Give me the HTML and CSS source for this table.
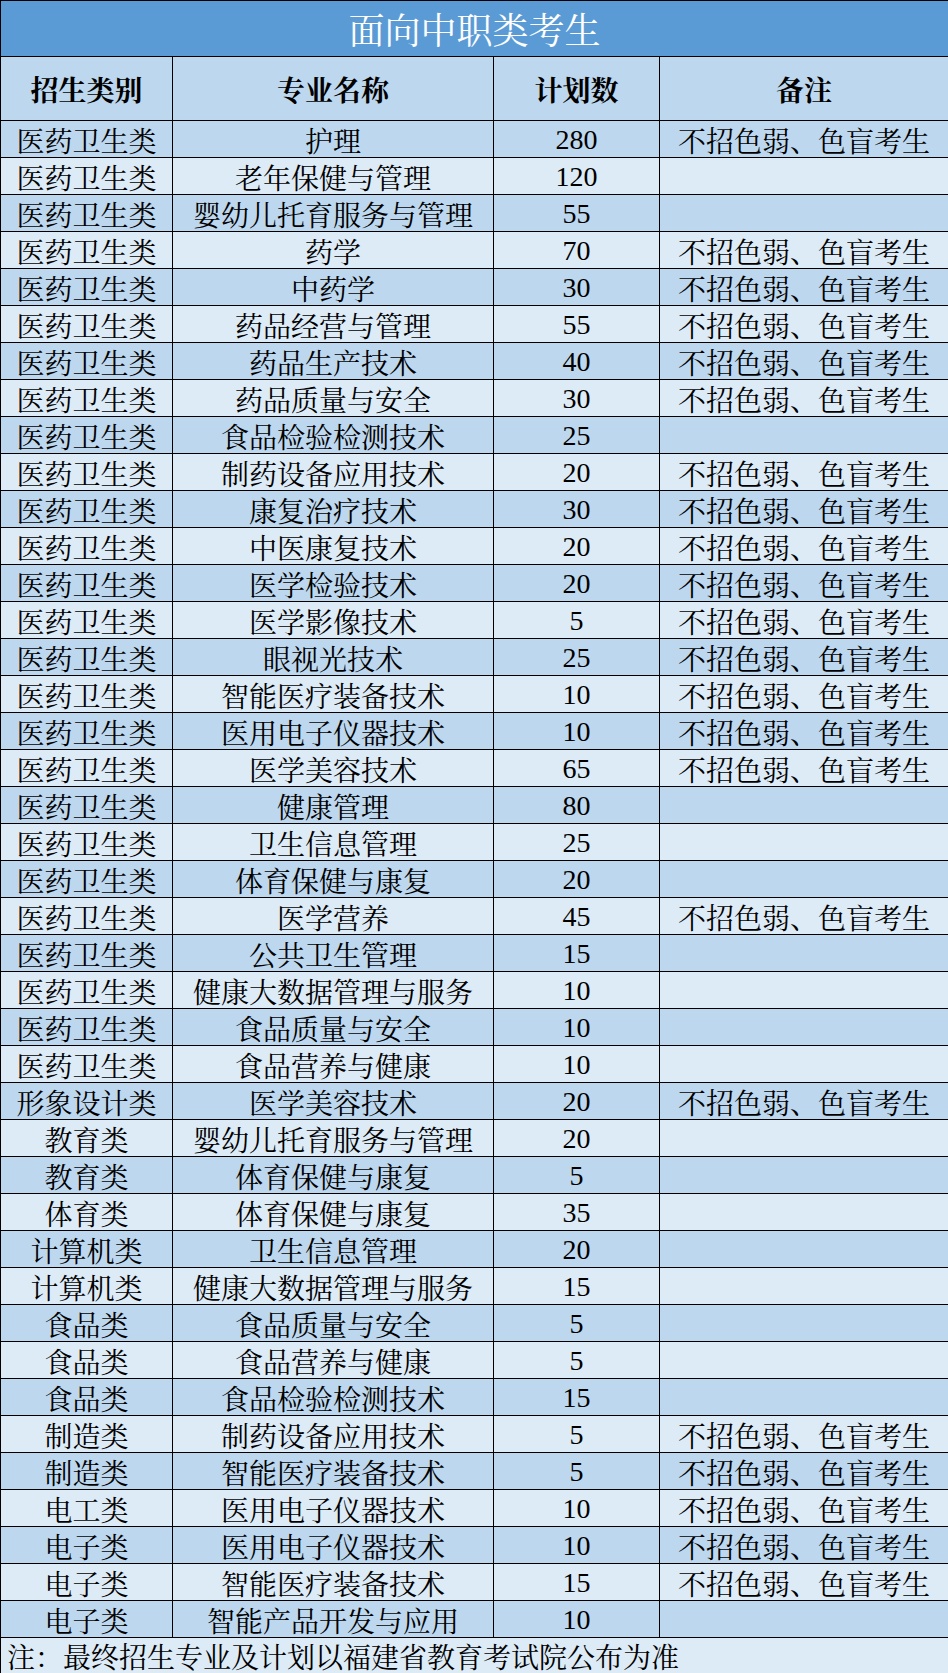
FILE: index.html
```html
<!DOCTYPE html>
<html lang="zh-CN">
<head>
<meta charset="utf-8">
<title>面向中职类考生</title>
<link rel="stylesheet" href="styles.css">
</head>
<body>
<table class="plan">
  <colgroup>
    <col class="c1"><col class="c2"><col class="c3"><col class="c4">
  </colgroup>
  <thead>
    <tr class="title"><th colspan="4">面向中职类考生</th></tr>
    <tr class="head"><th>招生类别</th><th>专业名称</th><th>计划数</th><th>备注</th></tr>
  </thead>
  <tbody>
    <tr><td>医药卫生类</td><td>护理</td><td class="num">280</td><td>不招色弱、色盲考生</td></tr>
    <tr><td>医药卫生类</td><td>老年保健与管理</td><td class="num">120</td><td></td></tr>
    <tr><td>医药卫生类</td><td>婴幼儿托育服务与管理</td><td class="num">55</td><td></td></tr>
    <tr><td>医药卫生类</td><td>药学</td><td class="num">70</td><td>不招色弱、色盲考生</td></tr>
    <tr><td>医药卫生类</td><td>中药学</td><td class="num">30</td><td>不招色弱、色盲考生</td></tr>
    <tr><td>医药卫生类</td><td>药品经营与管理</td><td class="num">55</td><td>不招色弱、色盲考生</td></tr>
    <tr><td>医药卫生类</td><td>药品生产技术</td><td class="num">40</td><td>不招色弱、色盲考生</td></tr>
    <tr><td>医药卫生类</td><td>药品质量与安全</td><td class="num">30</td><td>不招色弱、色盲考生</td></tr>
    <tr><td>医药卫生类</td><td>食品检验检测技术</td><td class="num">25</td><td></td></tr>
    <tr><td>医药卫生类</td><td>制药设备应用技术</td><td class="num">20</td><td>不招色弱、色盲考生</td></tr>
    <tr><td>医药卫生类</td><td>康复治疗技术</td><td class="num">30</td><td>不招色弱、色盲考生</td></tr>
    <tr><td>医药卫生类</td><td>中医康复技术</td><td class="num">20</td><td>不招色弱、色盲考生</td></tr>
    <tr><td>医药卫生类</td><td>医学检验技术</td><td class="num">20</td><td>不招色弱、色盲考生</td></tr>
    <tr><td>医药卫生类</td><td>医学影像技术</td><td class="num">5</td><td>不招色弱、色盲考生</td></tr>
    <tr><td>医药卫生类</td><td>眼视光技术</td><td class="num">25</td><td>不招色弱、色盲考生</td></tr>
    <tr><td>医药卫生类</td><td>智能医疗装备技术</td><td class="num">10</td><td>不招色弱、色盲考生</td></tr>
    <tr><td>医药卫生类</td><td>医用电子仪器技术</td><td class="num">10</td><td>不招色弱、色盲考生</td></tr>
    <tr><td>医药卫生类</td><td>医学美容技术</td><td class="num">65</td><td>不招色弱、色盲考生</td></tr>
    <tr><td>医药卫生类</td><td>健康管理</td><td class="num">80</td><td></td></tr>
    <tr><td>医药卫生类</td><td>卫生信息管理</td><td class="num">25</td><td></td></tr>
    <tr><td>医药卫生类</td><td>体育保健与康复</td><td class="num">20</td><td></td></tr>
    <tr><td>医药卫生类</td><td>医学营养</td><td class="num">45</td><td>不招色弱、色盲考生</td></tr>
    <tr><td>医药卫生类</td><td>公共卫生管理</td><td class="num">15</td><td></td></tr>
    <tr><td>医药卫生类</td><td>健康大数据管理与服务</td><td class="num">10</td><td></td></tr>
    <tr><td>医药卫生类</td><td>食品质量与安全</td><td class="num">10</td><td></td></tr>
    <tr><td>医药卫生类</td><td>食品营养与健康</td><td class="num">10</td><td></td></tr>
    <tr><td>形象设计类</td><td>医学美容技术</td><td class="num">20</td><td>不招色弱、色盲考生</td></tr>
    <tr><td>教育类</td><td>婴幼儿托育服务与管理</td><td class="num">20</td><td></td></tr>
    <tr><td>教育类</td><td>体育保健与康复</td><td class="num">5</td><td></td></tr>
    <tr><td>体育类</td><td>体育保健与康复</td><td class="num">35</td><td></td></tr>
    <tr><td>计算机类</td><td>卫生信息管理</td><td class="num">20</td><td></td></tr>
    <tr><td>计算机类</td><td>健康大数据管理与服务</td><td class="num">15</td><td></td></tr>
    <tr><td>食品类</td><td>食品质量与安全</td><td class="num">5</td><td></td></tr>
    <tr><td>食品类</td><td>食品营养与健康</td><td class="num">5</td><td></td></tr>
    <tr><td>食品类</td><td>食品检验检测技术</td><td class="num">15</td><td></td></tr>
    <tr><td>制造类</td><td>制药设备应用技术</td><td class="num">5</td><td>不招色弱、色盲考生</td></tr>
    <tr><td>制造类</td><td>智能医疗装备技术</td><td class="num">5</td><td>不招色弱、色盲考生</td></tr>
    <tr><td>电工类</td><td>医用电子仪器技术</td><td class="num">10</td><td>不招色弱、色盲考生</td></tr>
    <tr><td>电子类</td><td>医用电子仪器技术</td><td class="num">10</td><td>不招色弱、色盲考生</td></tr>
    <tr><td>电子类</td><td>智能医疗装备技术</td><td class="num">15</td><td>不招色弱、色盲考生</td></tr>
    <tr><td>电子类</td><td>智能产品开发与应用</td><td class="num">10</td><td></td></tr>
  </tbody>
  <tfoot>
    <tr class="note"><td colspan="4">注：最终招生专业及计划以福建省教育考试院公布为准</td></tr>
  </tfoot>
</table>
</body>
</html>
```

FILE: styles.css
```css
html, body {
  margin: 0;
  padding: 0;
  background: #ffffff;
}

.plan {
  width: 948px;
  table-layout: fixed;
  border-collapse: collapse;
  font-family: "Noto Serif CJK SC", "Noto Sans CJK SC", "Liberation Serif", serif;
  font-size: 28px;
  color: #000000;
}

.c1 { width: 172px; }
.c2 { width: 321px; }
.c3 { width: 166px; }
.c4 { width: 289px; }

.plan th,
.plan td {
  border: 1px solid #000000;
  padding: 1px 0 0 0;
  line-height: 34px;
  text-align: center;
  vertical-align: middle;
  white-space: nowrap;
}

.plan td.num {
  font-family: "Liberation Serif", serif;
}

.title {
  height: 56px;
}

.title th {
  background: #5b9bd5;
  color: #ffffff;
  font-size: 36px;
  line-height: 44px;
  font-weight: normal;
  padding-top: 0;
}

.head {
  height: 64px;
}

.head th {
  background: #bdd7ee;
  font-weight: bold;
}

.plan tbody tr {
  height: 37px;
}

.plan tbody tr:nth-child(odd) td {
  background: #bdd7ee;
}

.plan tbody tr:nth-child(even) td {
  background: #ddebf7;
}

.note {
  height: 36px;
}

.note td {
  background: #ddebf7;
  text-align: left;
  padding-left: 6px;
}
```
